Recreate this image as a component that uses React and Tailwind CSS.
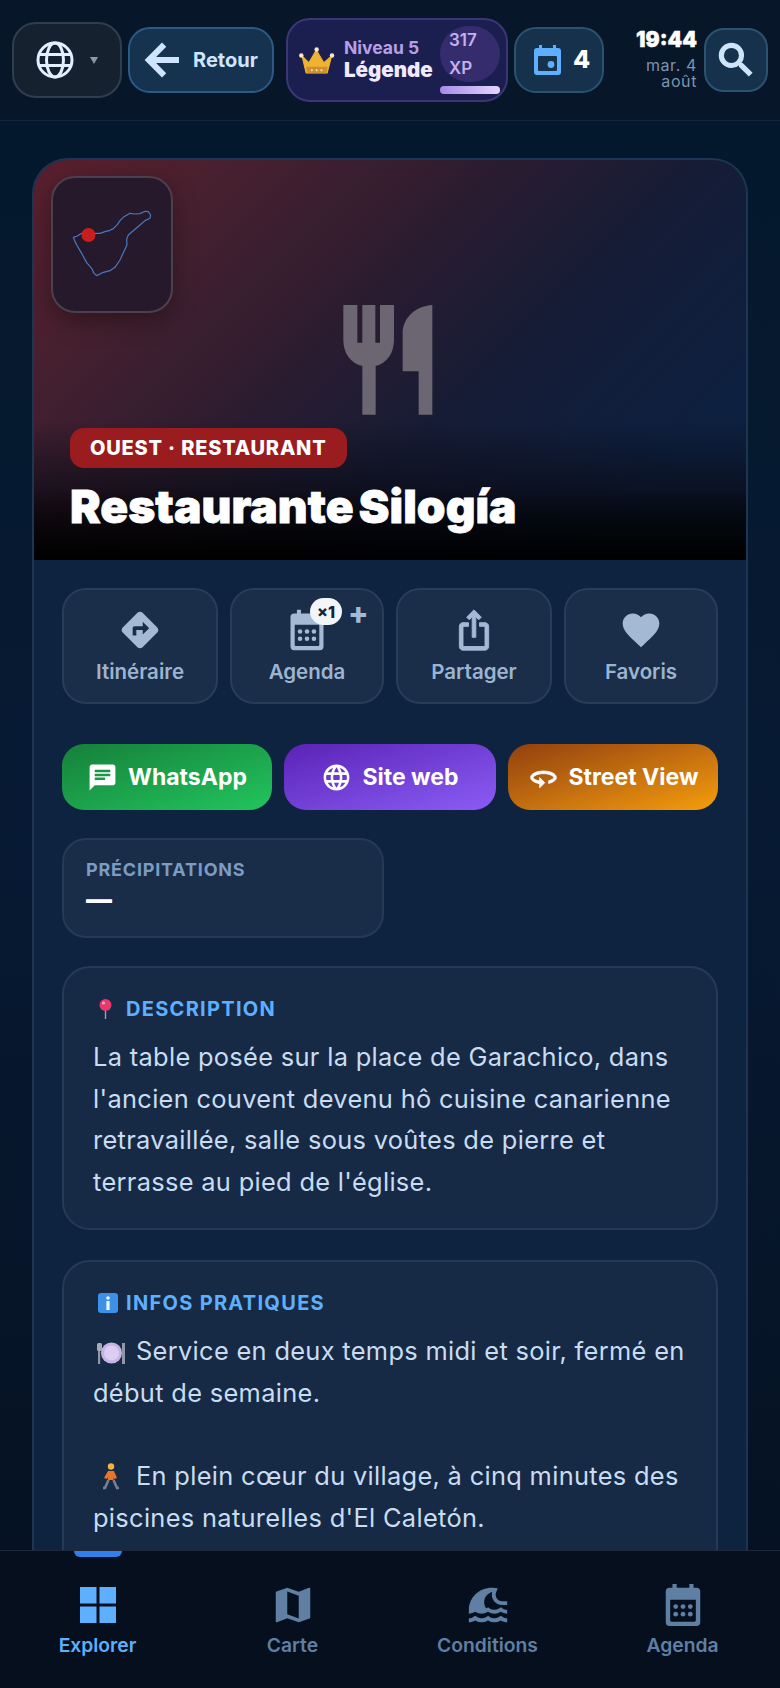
import React from "react";
import { MdDirections, MdFavorite, MdChat, MdLanguage, MdMap, MdTsunami } from "react-icons/md";

const inter = "font-['Inter',sans-serif]";

function Bold({ d, size, sw }) {
  return (
    <svg width={size} height={size} viewBox="0 0 24 24" fill="currentColor" stroke="currentColor" strokeWidth={sw}>
      <path d={d} />
    </svg>
  );
}

const ARROW = "M20 11H7.83l5.59-5.59L12 4l-8 8 8 8 1.41-1.41L7.83 13H20v-2z";
const SEARCH = "M15.5 14h-.79l-.28-.27C15.41 12.59 16 11.11 16 9.5 16 5.91 13.09 3 9.5 3S3 5.91 3 9.5 5.91 16 9.5 16c1.61 0 3.09-.59 4.23-1.57l.27.28v.79l5 4.99L20.49 19l-4.99-5zm-6 0C7.01 14 5 11.99 5 9.5S7.01 5 9.5 5 14 7.01 14 9.5 11.99 14 9.5 14z";
const SHARE = "M16 5l-1.42 1.42-1.59-1.59V16h-1.98V4.83L9.42 6.42 8 5l4-4 4 4zm4 5v11c0 1.1-.9 2-2 2H6c-1.11 0-2-.9-2-2V10c0-1.11.89-2 2-2h3v2H6v11h12V10h-3V8h3c1.1 0 2 .89 2 2z";
const TURN = "M12 7C6.48 7 2 9.24 2 12c0 2.24 2.94 4.13 7 4.77V20l4-4-4-4v2.73c-3.15-.56-5-1.9-5-2.73 0-1.06 3.04-3 8-3s8 1.94 8 3c0 .73-1.46 1.89-4 2.53v2.05c3.53-.77 6-2.53 6-4.58 0-2.76-4.48-5-10-5z";

function CalendarIcon({ size }) {
  return (
    <svg width={size} height={size} viewBox="0 0 24 24" fill="currentColor">
      <path fillRule="evenodd" d="M6.5 1h2.2v2h6.6V1h2.2v2H19a2 2 0 0 1 2 2v16a2 2 0 0 1-2 2H5a2 2 0 0 1-2-2V5a2 2 0 0 1 2-2h1.5zM5.3 9.2v10.8c0 .4.3.7.7.7h12c.4 0 .7-.3.7-.7V9.2z" />
      <circle cx="8.2" cy="12.8" r="1.25" />
      <circle cx="12" cy="12.8" r="1.25" />
      <circle cx="15.8" cy="12.8" r="1.25" />
      <circle cx="8.2" cy="16.8" r="1.25" />
      <circle cx="12" cy="16.8" r="1.25" />
      <circle cx="15.8" cy="16.8" r="1.25" />
    </svg>
  );
}

function Action({ icon, label, w, children }) {
  return (
    <div className={`relative ${w} h-[116px] rounded-[24px] border-2 border-[#2a3d58] bg-[#1a2e49] flex flex-col items-center pt-[18px] text-[#a3b9d4]`}>
      <div className="text-[44px] leading-none h-[44px]">{icon}</div>
      <div className="mt-[6px] text-[20.5px] font-semibold leading-[28px] text-[#9db4d0]">{label}</div>
      {children}
    </div>
  );
}

function LinkBtn({ icon, label, w, cls }) {
  return (
    <div className={`${w} h-[66px] rounded-[22px] flex items-center justify-center gap-[10px] text-white text-[23px] font-bold ${cls}`}>
      <span className="text-[31px] leading-none">{icon}</span>
      <span>{label}</span>
    </div>
  );
}

function NavItem({ icon, label, active }) {
  return (
    <div className={`flex-1 flex flex-col items-center pt-[31px] relative ${active ? "text-[#5eb0ff]" : "text-[#5f7fa3]"}`}>
      {active && <div className="absolute top-0 left-[74px] w-[48px] h-[6px] rounded-b-[6px] bg-[#2f80ed]"></div>}
      <div className="text-[46px] leading-none h-[46px] flex items-center justify-center">{icon}</div>
      <div className="mt-[4px] text-[19.3px] font-semibold leading-[26px]">{label}</div>
    </div>
  );
}

function SectionHead({ icon, children }) {
  return (
    <div className="flex items-center pl-[3px] gap-[7px] text-[20px] font-bold tracking-[1.3px] leading-[26px] text-[#5eb0ff]">
      <span className="w-[23px] flex justify-center">{icon}</span>
      <span>{children}</span>
    </div>
  );
}

export default function App() {
  return (
    <div className={`${inter} w-[780px] h-[1688px] flex flex-col overflow-hidden bg-gradient-to-b from-[#04182c] via-[#071a33] to-[#05101f]`}>
      <header className="h-[121px] shrink-0 border-b border-[#13263a] bg-[#071628] flex items-center pl-[12px] pr-[12px]">
        <div className="w-[110px] h-[76px] rounded-[24px] border-2 border-[#2f3d4f] bg-[#15212f] flex items-center pl-[22px] gap-[16px] text-[#e3efff]">
          <svg width="38" height="38" viewBox="0 0 38 38" fill="none" stroke="currentColor" strokeWidth="3">
            <circle cx="19" cy="19" r="17" />
            <ellipse cx="19" cy="19" rx="8.5" ry="17" />
            <path d="M3.5 13.5h31M3.5 24.5h31" />
          </svg>
          <span className="w-0 h-0 border-l-[4px] border-r-[4px] border-t-[7px] border-l-transparent border-r-transparent border-t-[#8a97a8]"></span>
        </div>
        <div className="ml-[6px] w-[146px] h-[66px] rounded-[22px] border-2 border-[#2c5a85] bg-[#15324f] flex items-center pl-[8px] gap-[7px] text-[#cfe4ff]">
          <Bold d={ARROW} size={48} sw={1} />
          <span className="text-[20px] font-bold">Retour</span>
        </div>
        <div className="ml-[12px] w-[222px] h-[84px] rounded-[24px] border-2 border-[#3d3576] bg-[#1b1f4f] flex items-center pl-[11px] relative">
          <svg width="36" height="30" viewBox="32 40 100 88" className="shrink-0">
            <path d="M38 72 L58 92 L80 55 L102 92 L125 72 L112 122 H50Z" fill="#f0b232" stroke="#f0b232" strokeLinejoin="round" strokeWidth="3" />
            <path d="M50 104 H113 L110 123 H53Z" fill="#d0902a" />
            <circle cx="36" cy="71" r="6.5" fill="#f7e7c4" />
            <circle cx="81" cy="53" r="6.5" fill="#f7e7c4" />
            <circle cx="126" cy="71" r="6.5" fill="#f7e7c4" />
            <circle cx="67" cy="114" r="3" fill="#f7e7c4" />
            <circle cx="81" cy="114" r="3" fill="#f7e7c4" />
            <circle cx="95" cy="114" r="3" fill="#f7e7c4" />
          </svg>
          <div className="ml-[9px] flex flex-col">
            <span className="text-[17.5px] font-bold leading-[20px] text-[#b79fe8]">Niveau 5</span>
            <span className="text-[20.5px] font-black leading-[24px] text-[#f1e9ff]">Légende</span>
          </div>
          <div className="absolute left-[152px] top-[6px] w-[60px] h-[56px] rounded-full bg-[#352c6e] text-[#c4b0ee] text-[17px] font-semibold leading-[28px] pl-[9px]">
            <div>317</div>
            <div>XP</div>
          </div>
          <div className="absolute left-[152px] top-[66px] w-[60px] h-[8px] rounded-full bg-gradient-to-r from-[#a88ae8] to-[#e5d6fb]"></div>
        </div>
        <div className="ml-[6px] w-[90px] h-[66px] rounded-[22px] border-2 border-[#2c5270] bg-[#15314c] flex items-center pl-[18px] gap-[12px]">
          <svg width="27" height="30" viewBox="0 0 27 30">
            <path d="M5 0h3v3h11V0h3v3h2a3 3 0 0 1 3 3v21a3 3 0 0 1-3 3H3a3 3 0 0 1-3-3V6a3 3 0 0 1 3-3h2z" fill="#5eb0ff" />
            <rect x="4" y="11" width="19" height="15" rx="1" fill="#15314c" />
            <circle cx="17" cy="19.5" r="3.4" fill="#5eb0ff" />
          </svg>
          <span className="text-[25px] font-extrabold text-white">4</span>
        </div>
        <div className="flex-1 flex flex-col items-end text-right pb-[3px]">
          <div className="text-[21px] font-black leading-[24px] text-white [-webkit-text-stroke:0.4px_white]">19:44</div>
          <div className="mt-[5px] text-[16px] leading-[16px] tracking-[0.6px] text-[#7d94b0]">mar. 4</div>
          <div className="text-[16px] leading-[16px] tracking-[0.6px] text-[#7d94b0]">août</div>
        </div>
        <div className="ml-[7px] w-[64px] h-[64px] rounded-[20px] border-2 border-[#2c5270] bg-[#15314c] flex items-center justify-center text-[#cfe4f8]">
          <Bold d={SEARCH} size={44} sw={0.8} />
        </div>
      </header>

      <main className="flex-1 min-h-0 overflow-hidden px-[32px] pt-[37px]">
        <div className="rounded-t-[36px] border-2 border-b-0 border-[#1c3652] overflow-hidden bg-[#0e2340] h-[1500px]">
          <div className="relative h-[400px] bg-[linear-gradient(135deg,#5c1f2e_0%,#43202f_22%,#2b1c30_42%,#161c36_60%,#0d2040_85%)] overflow-hidden">
            <div className="absolute left-0 right-0 bottom-0 h-[140px] bg-gradient-to-b from-transparent via-[#08081099] to-black"></div>
            <div className="absolute left-[17px] top-[16px] w-[122px] h-[137px] rounded-[24px] border-2 border-[#4c404e] bg-[#25192b] shadow-[0_8px_24px_rgba(0,0,0,0.35)]">
              <svg width="118" height="133" viewBox="53 178 118 133" fill="none">
                <path transform="translate(20 150) scale(0.3333)" d="M160 262 L172 258 L185 250 L205 252 L228 250 L240 250 L255 245 L270 241 L280 236 L292 224 L300 212 L312 200 L330 190 L345 192 L360 191 L375 184 L385 185 L392 195 L390 205 L375 212 L360 225 L345 238 L325 255 L320 268 L321 285 L310 308 L300 330 L285 352 L270 362 L250 367 L230 377 L222 370 L215 355 L200 338 L185 310 L172 288 L165 275 Z" stroke="#4a78c0" strokeWidth="3.6" strokeLinejoin="round" />
                <circle cx="88.5" cy="235" r="7" fill="#c81e1e" />
              </svg>
            </div>
            <svg className="absolute left-[296px] top-[130px]" width="120" height="140" viewBox="0 0 360 420" fill="#6b6672">
              <path d="M40 45H82V158H97V45H136V158H150V45H192V150C192 190 170 220 137 228V374H97V228C62 220 40 190 40 150Z" />
              <path d="M307 45V374H266V244H218V130C218 85 255 48 307 45Z" />
            </svg>
            <div className="absolute left-[36px] top-[268px] h-[40px] px-[20px] rounded-[14px] bg-[#9a1c1f] text-white text-[20px] font-extrabold tracking-[0.8px] flex items-center">OUEST · RESTAURANT</div>
            <div className="absolute left-[36px] top-[318px] text-[46px] font-black leading-[56px] text-white tracking-[0.05px] [word-spacing:-4px] [-webkit-text-stroke:0.8px_white] whitespace-nowrap">Restaurante Silogía</div>
          </div>

          <div className="px-[28px] pt-[28px]">
            <div className="flex gap-[12px]">
              <Action w="w-[156px]" icon={<MdDirections />} label="Itinéraire" />
              <Action w="w-[154px]" icon={<CalendarIcon size={44} />} label="Agenda">
                <div className="absolute left-[78px] top-[8px] w-[32px] h-[27px] rounded-full bg-[#f2f5f9] text-[#15233a] text-[16px] font-extrabold flex items-center justify-center">×1</div>
                <div className="absolute left-[116px] top-[8px] text-[30px] font-extrabold leading-[30px] text-[#a3b9d4]">+</div>
              </Action>
              <Action w="w-[156px]" icon={<Bold d={SHARE} size={44} sw={0.5} />} label="Partager" />
              <Action w="w-[154px]" icon={<MdFavorite />} label="Favoris" />
            </div>
            <div className="flex gap-[12px] mt-[40px]">
              <LinkBtn w="w-[210px]" icon={<MdChat />} label="WhatsApp" cls="bg-gradient-to-br from-[#16803a] to-[#22c55e]" />
              <LinkBtn w="w-[212px]" icon={<MdLanguage />} label="Site web" cls="bg-gradient-to-br from-[#5b21b6] to-[#8b5cf6]" />
              <LinkBtn w="w-[210px]" icon={<Bold d={TURN} size={31} sw={0.6} />} label="Street View" cls="bg-gradient-to-br from-[#92400e] to-[#f59e0b]" />
            </div>
            <div className="mt-[28px] w-[322px] h-[100px] rounded-[24px] border-2 border-[#263a55] bg-[#1a2d48] pl-[22px] pt-[19px]">
              <div className="text-[18px] font-bold leading-[22px] tracking-[0.8px] text-[#7b9cc3]">PRÉCIPITATIONS</div>
              <div className="text-[26px] font-black leading-[34px] text-white mt-[2px]">—</div>
            </div>
            <div className="mt-[28px] rounded-[28px] border-2 border-[#263a55] bg-[#162a45] pl-[29px] pr-[28px] pt-[28px] pb-[26px]">
              <SectionHead icon={
                <svg width="15" height="20" viewBox="0 0 15 20" className="-ml-[4px]">
                  <rect x="6.8" y="9" width="1.4" height="11" fill="#9aa3ad" />
                  <circle cx="7.5" cy="6" r="6" fill="#e8386d" />
                  <circle cx="5.5" cy="4" r="1.5" fill="#f9a6bf" />
                </svg>
              }>DESCRIPTION</SectionHead>
              <p className="mt-[14px] text-[25.4px] leading-[41.6px] tracking-[0.32px] text-[#c9dcf2]">La table posée sur la place de Garachico, dans l'ancien couvent devenu hô cuisine canarienne retravaillée, salle sous voûtes de pierre et terrasse au pied de l'église.</p>
            </div>
            <div className="mt-[30px] rounded-[28px] border-2 border-[#263a55] bg-[#162a45] pl-[29px] pr-[28px] pt-[28px] pb-[80px]">
              <SectionHead icon={
                <svg width="20" height="20" viewBox="0 0 20 20">
                  <rect width="20" height="20" rx="3" fill="#3d8fe8" />
                  <circle cx="10" cy="5" r="1.8" fill="#eef5ff" />
                  <rect x="8.4" y="8" width="3.2" height="9" fill="#eef5ff" />
                </svg>
              }>INFOS PRATIQUES</SectionHead>
              <p className="mt-[14px] text-[25.4px] leading-[41.6px] tracking-[0.32px] text-[#c9dcf2]">
                <span className="inline-block w-[43px] align-[-5px]">
                  <svg width="30" height="24" viewBox="0 0 30 24" className="ml-[4px]">
                    <rect x="1" y="2" width="2.2" height="21" fill="#8f96a6" />
                    <rect x="0" y="2" width="5" height="8" rx="1.5" fill="#a6abb9" />
                    <rect x="25" y="2" width="3" height="21" fill="#8f96a6" />
                    <circle cx="14.5" cy="12" r="10.5" fill="#c7b4e6" />
                    <circle cx="14.5" cy="12" r="7.5" fill="#dccdf2" />
                  </svg>
                </span>Service en deux temps midi et soir, fermé en début de semaine.<br /><br />
                <span className="inline-block w-[43px] align-[-5px]">
                  <svg width="18" height="27" viewBox="0 0 18 27" className="ml-[9px]">
                    <circle cx="9" cy="3.5" r="3.2" fill="#f2b33d" />
                    <path d="M6 8 h6 l3 7 -3 1 -0.5 -2 0 3 h-5.5 l0 -3 -1 2 -3 -1z" fill="#e8752a" />
                    <path d="M6.5 17 L3 25 H1 M11.5 17 L15 25 H17" stroke="#7a7f8f" strokeWidth="2.6" fill="none" />
                  </svg>
                </span>En plein cœur du village, à cinq minutes des piscines naturelles d'El Caletón.
              </p>
            </div>
          </div>
        </div>
      </main>

      <nav className="h-[138px] shrink-0 border-t border-[#20293a] bg-[#060f1e] flex">
        <NavItem active icon={
          <svg width="36" height="36" viewBox="0 0 36 36" fill="currentColor">
            <rect x="0" y="0" width="16.5" height="16.5" />
            <rect x="19.5" y="0" width="16.5" height="16.5" />
            <rect x="0" y="19.5" width="16.5" height="16.5" />
            <rect x="19.5" y="19.5" width="16.5" height="16.5" />
          </svg>
        } label="Explorer" />
        <NavItem icon={<MdMap />} label="Carte" />
        <NavItem icon={<MdTsunami />} label="Conditions" />
        <NavItem icon={<CalendarIcon size={46} />} label="Agenda" />
      </nav>
    </div>
  );
}
